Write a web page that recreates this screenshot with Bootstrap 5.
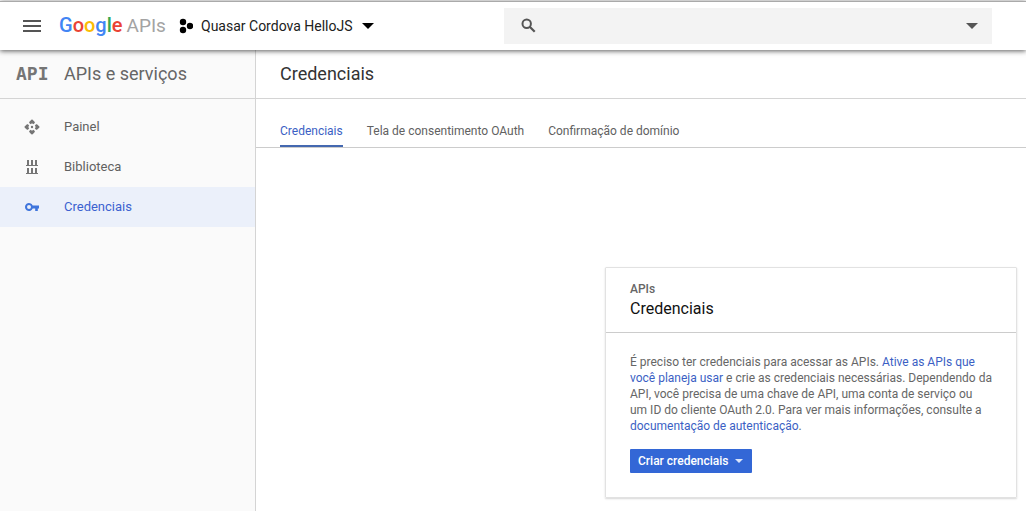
<!DOCTYPE html>
<html lang="pt-BR">
<head>
<meta charset="utf-8">
<meta name="viewport" content="width=device-width, initial-scale=1">
<title>Credenciais – Google APIs</title>
<link href="https://cdn.jsdelivr.net/npm/bootstrap@5.3.0/dist/css/bootstrap.min.css" rel="stylesheet">
<style>
  body { font-family: Roboto, "Liberation Sans", sans-serif; font-size: 12px; line-height: 16px; color: #666; background: #fff; }
  a { color: #3b5fc4; text-decoration: none; }
  svg { display: block; flex: none; }
  .topbar { height: 49px; border-top: 1px solid #aaa; margin-top: 1px; padding-bottom: 1px; background: #fff; box-shadow: 0 1px 5px rgba(0,0,0,.65); z-index: 2; }
  .topbar-start { flex: 0 0 504px; padding-left: 20px; }
  .logo { font-size: 19px; line-height: 24px; color: #a3a3a3; margin-left: 15px; width: 107px; gap: 4px; }
  .logo-name { font-size: 20px; font-weight: 500; }
  .g-blue { color: #4285f4; } .g-red { color: #ea4335; } .g-yellow { color: #fbbc05; } .g-green { color: #34a853; }
  .project { font-size: 14px; line-height: 20px; color: #212121; margin-left: 13px; }
  .searchbox { height: 36px; background: #f3f3f3; margin-right: 34px; padding: 0 12px 0 16px; }
  .searchbox input { font-size: 14px; outline: 0; min-width: 0; }
  .sidebar { flex: 0 0 256px; background: #fafafa; border-right: 1px solid #d4d4d4; }
  .heading-row { height: 49px; border-bottom: 1px solid #d4d4d4; font-size: 18px; line-height: 24px; }
  .heading-row h1, .heading-row h2 { font-size: 18px; line-height: 24px; font-weight: 400; margin: 0; }
  .heading-row h1 { color: #333; }
  .api-mark { font: bold 18px/20px "DejaVu Sans Mono", monospace; color: #757575; width: 48px; }
  .side-nav { padding-top: 8px; font-size: 13px; }
  .side-nav .nav-link { height: 40px; padding: 0 24px; gap: 24px; color: #616161; }
  .side-nav .nav-link.active { background: #ebf0fa; color: #3b62d0; }
  .tabs { height: 49px; border-bottom: 1px solid #ccc; padding-left: 24px; gap: 24px; }
  .tabs .nav-link { padding: 0 0 6px; color: #616161; border-bottom: 2px solid transparent; }
  .tabs .nav-link.active { color: #3b5fc4; border-color: #4468b0; }
  .panel { width: 412px; margin: 119px 9px 12px auto; border: 1px solid #e2e2e2; border-radius: 1px; box-shadow: 0 1px 2px rgba(0,0,0,.16); }
  .panel-top { padding: 13px 24px 11px; border-bottom: 1px solid #ccc; }
  .panel-top h2 { font-size: 16px; line-height: 24px; color: #111; font-weight: 400; margin: 0; }
  .panel-top p { font-weight: 500; color: #666; margin: 0; }
  .panel-main { padding: 21px 23px 24px 24px; }
  .panel-main p { margin-bottom: 15px; }
  .btn-create { height: 24px; font-size: 12px; line-height: 16px; font-weight: 500; color: #fff; background: #3367d6; border: 0; border-radius: 1px; padding: 0 8px; gap: 5px; }
  .btn-create:hover { color: #fff; background: #2a56c6; }
</style>
</head>
<body class="d-flex flex-column min-vh-100">
<header class="topbar d-flex align-items-center position-relative">
  <div class="topbar-start d-flex align-items-center">
    <button type="button" class="btn p-0 border-0" aria-label="Menu">
      <svg width="24" height="24" fill="#555"><path d="M3 6h18v2H3zm0 5h18v2H3zm0 5h18v2H3z"/></svg>
    </button>
    <a href="#" class="logo text-nowrap d-flex align-items-baseline"><span class="logo-name"><span class="g-blue">G</span><span class="g-red">o</span><span class="g-yellow">o</span><span class="g-blue">g</span><span class="g-green">l</span><span class="g-red">e</span></span><span>APIs</span></a>
    <button type="button" class="project btn p-0 border-0 d-flex align-items-center">
      <svg width="14" height="16"><circle cx="4" cy="4" r="3.200"/><circle cx="4" cy="12" r="3.200"/><circle cx="11" cy="8" r="3.200"/></svg>
      <span class="mx-2 ps-0">Quasar Cordova HelloJS</span>
      <svg width="14" height="8"><path d="M1 1h12L7 7z"/></svg>
    </button>
  </div>
  <form class="searchbox d-flex align-items-center flex-grow-1" role="search">
    <svg width="18" height="18" fill="none" stroke="#555" stroke-width="2"><circle cx="6.700" cy="6.700" r="4.200"/><path d="M9.700 9.700l5 5" stroke-width="2.200"/></svg>
    <input type="search" class="flex-grow-1 border-0 bg-transparent" aria-label="Pesquisar">
    <button type="button" class="btn p-0 border-0" aria-label="Opções de pesquisa"><svg width="16" height="8" fill="#555"><path d="M2 1h12L8 7z"/></svg></button>
  </form>
</header>
<div class="d-flex flex-grow-1">
  <aside class="sidebar">
    <div class="heading-row d-flex align-items-center ps-3"><span class="api-mark">API</span><h2>APIs e serviços</h2></div>
    <nav class="side-nav nav flex-column">
      <a class="nav-link d-flex align-items-center" href="#">
        <svg width="16" height="16" fill="#757575"><path d="M5.200 3L8 .200 10.800 3v1L9.300 5.200 8 4 6.700 5.200 5.200 4zM5.200 13L8 15.800l2.800-2.800v-1l-1.500-1.200L8 12l-1.300-1.200L5.200 12zM3 5.200L.200 8 3 10.800h1l1.200-1.500L4 8l1.200-1.300L4 5.200zM13 5.200L15.800 8 13 10.800h-1l-1.200-1.500L12 8l-1.200-1.300L12 5.200z"/><circle cx="8" cy="2.800" r="1.600"/><circle cx="8" cy="13.200" r="1.600"/><circle cx="2.800" cy="8" r="1.600"/><circle cx="13.200" cy="8" r="1.600"/><circle cx="8" cy="8" r="1.200"/></svg>
        Painel</a>
      <a class="nav-link d-flex align-items-center" href="#">
        <svg width="16" height="16" fill="#757575"><path d="M3 1h2v5H3zM7 1h2v5H7zM11 1h2v5h-2zM2 6h12v1H2zM3 9h2v5H3zM7 9h2v5H7zM11 9h2v5h-2zM2 14h12v1H2z"/></svg>
        Biblioteca</a>
      <a class="nav-link active d-flex align-items-center" href="#" aria-current="page">
        <svg width="16" height="16" fill="#3f75dc"><path fill-rule="evenodd" d="M8.700 6.600H15v2.900h-1.200V12h-2.600V9.500H8.700A4 4 0 1 1 8.700 6.600zM5 6a2 2 0 1 0 0 4 2 2 0 0 0 0-4z"/></svg>
        Credenciais</a>
    </nav>
  </aside>
  <main class="flex-grow-1">
    <div class="heading-row d-flex align-items-center ps-4"><h1>Credenciais</h1></div>
    <nav class="tabs nav flex-nowrap align-items-end">
      <a class="nav-link active" href="#" aria-current="page">Credenciais</a>
      <a class="nav-link" href="#">Tela de consentimento OAuth</a>
      <a class="nav-link" href="#">Confirmação de domínio</a>
    </nav>
    <section class="panel">
      <div class="panel-top"><p>APIs</p><h2>Credenciais</h2></div>
      <div class="panel-main">
        <p>É preciso ter credenciais para acessar as APIs. <a href="#">Ative as APIs que<br>você planeja usar</a> e crie as credenciais necessárias. Dependendo da API, você precisa de uma chave de API, uma conta de serviço ou<br>um ID do cliente OAuth 2.0. Para ver mais informações, consulte a <a href="#">documentação de autenticação</a>.</p>
        <button type="button" class="btn-create btn d-inline-flex align-items-center">Criar credenciais
          <svg width="10" height="6" fill="#dbe5fa"><path d="M1 1h8L5 5z"/></svg></button>
      </div>
    </section>
  </main>
</div>
<script src="https://cdn.jsdelivr.net/npm/bootstrap@5.3.0/dist/js/bootstrap.bundle.min.js"></script>
</body>
</html>
